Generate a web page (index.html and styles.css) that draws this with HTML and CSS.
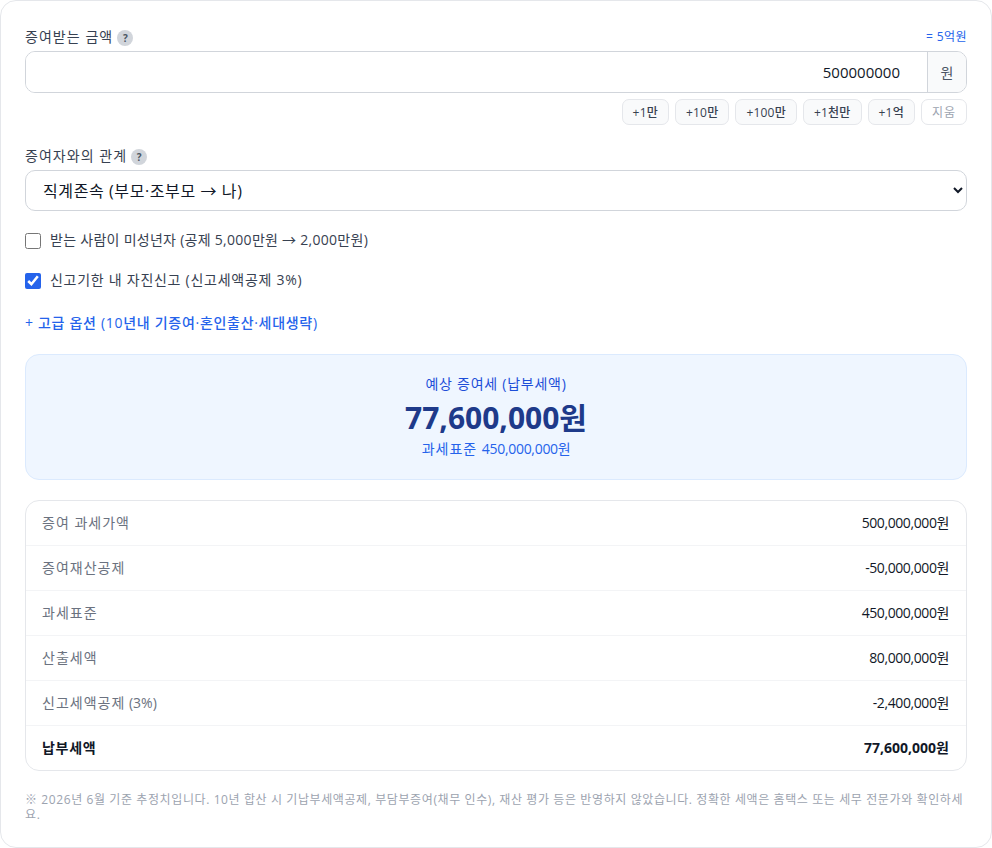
FILE: index.html
```html
<!DOCTYPE html>
<html lang="ko">
<head>
    <meta charset="utf-8">
    <title>증여세 계산기</title>
    <link rel="stylesheet" href="styles.css">
</head>
<body>
    <div class="card">
        <div class="field amount-field">
            <div class="label-row">
                <label class="label"><span class="label-text">증여받는 금액</span> <span class="help">?</span></label>
                <span class="hint">= 5억원</span>
            </div>
            <div class="input-group">
                <input class="amount-input" type="text" value="500000000">
                <span class="unit">원</span>
            </div>
            <div class="quick-group">
                <button class="quick">+1만</button>
                <button class="quick">+10만</button>
                <button class="quick">+100만</button>
                <button class="quick">+1천만</button>
                <button class="quick">+1억</button>
                <button class="quick clear">지움</button>
            </div>
        </div>

        <div class="field relation-field">
            <label class="label"><span class="label-text">증여자와의 관계</span> <span class="help">?</span></label>
            <select class="relation">
                <option>직계존속 (부모·조부모 → 나)</option>
            </select>
        </div>

        <label class="check minor"><input type="checkbox"> <span class="check-text">받는 사람이 미성년자 (공제 5,000만원 → 2,000만원)</span></label>
        <label class="check filing"><input type="checkbox" checked> <span class="check-text">신고기한 내 자진신고 (신고세액공제 3%)</span></label>

        <a class="advanced" href="#">+ 고급 옵션 (10년내 기증여·혼인출산·세대생략)</a>

        <div class="result">
            <div class="result-label">예상 증여세 (납부세액)</div>
            <div class="result-value">77,600,000원</div>
            <div class="result-sub"><span class="result-sub-name">과세표준 </span>450,000,000원</div>
        </div>

        <div class="breakdown">
            <div class="row"><span>증여 과세가액</span><b>500,000,000원</b></div>
            <div class="row"><span>증여재산공제</span><b>-50,000,000원</b></div>
            <div class="row"><span>과세표준</span><b>450,000,000원</b></div>
            <div class="row"><span>산출세액</span><b>80,000,000원</b></div>
            <div class="row"><span>신고세액공제<em class="latin"> (3%)</em></span><b>-2,400,000원</b></div>
            <div class="row total"><span>납부세액</span><b>77,600,000원</b></div>
        </div>

        <p class="note">※ 2026년 6월 기준 추정치입니다. 10년 합산 시 기납부세액공제, 부담부증여(채무 인수), 재산 평가 등은 반영하지 않았습니다. 정확한 세액은 홈택스 또는 세무 전문가와 확인하세요.</p>
    </div>
</body>
</html>
```

FILE: styles.css
```css
* {
    box-sizing: border-box;
}
body {
    margin: 0;
    background-color: #ffffff;
    font-family: "Open Sans", "Noto Sans CJK KR", sans-serif;
    color: #111827;
}
.card {
    height: 848px;
    padding: 24px;
    background-color: #ffffff;
    border: 1px solid #e5e7eb;
    border-radius: 16px;
    overflow: hidden;
}
.label-row {
    display: flex;
    justify-content: space-between;
    align-items: center;
    height: 26px;
}
.label {
    display: flex;
    align-items: center;
    gap: 4px;
    height: 24px;
    font-size: 14px;
    color: #374151;
}
.label-text {
    padding-bottom: 4px;
    letter-spacing: 1.05px;
}
.help {
    display: flex;
    align-items: center;
    justify-content: center;
    width: 16px;
    height: 16px;
    border-radius: 50%;
    background-color: #d1d5db;
    color: #4b5563;
    font-size: 10px;
    font-weight: 700;
}
.hint {
    padding-bottom: 4px;
    font-size: 12px;
    letter-spacing: 0.4px;
    color: #2563eb;
}
.input-group {
    display: flex;
    height: 42px;
    border: 1px solid #d1d5db;
    border-radius: 10px;
    overflow: hidden;
}
.amount-input {
    flex: 1;
    min-width: 0;
    padding: 0 27px 0 26px;
    border: none;
    outline: none;
    text-align: right;
    font-family: inherit;
    font-size: 15px;
    color: #111827;
}
.unit {
    display: flex;
    align-items: center;
    justify-content: center;
    width: 39px;
    border-left: 1px solid #d1d5db;
    background-color: #f9fafb;
    font-size: 14px;
    color: #4b5563;
}
.quick-group {
    display: flex;
    justify-content: flex-end;
    gap: 6px;
    margin-top: 6px;
}
.quick {
    height: 26px;
    padding: 0 10px;
    border: 1px solid #e5e7eb;
    border-radius: 7px;
    background-color: #f9fafb;
    font-family: inherit;
    font-size: 12px;
    font-weight: 500;
    letter-spacing: 0.2px;
    color: #374151;
}
.clear {
    font-weight: 400;
    letter-spacing: 1px;
    background-color: #ffffff;
    color: #9ca3af;
}
.relation-field {
    margin-top: 20px;
}
.relation-field .label {
    margin-bottom: 1px;
}
.relation {
    display: block;
    width: 100%;
    height: 41px;
    padding: 0 13px;
    border: 1px solid #d1d5db;
    border-radius: 10px;
    background-color: #ffffff;
    font-family: inherit;
    font-size: 16px;
    letter-spacing: 0.6px;
    color: #111827;
}
.check {
    display: flex;
    align-items: center;
    gap: 9px;
    height: 20px;
    font-size: 14px;
    color: #374151;
}
.check input {
    width: 16px;
    height: 16px;
    margin: 0;
    accent-color: #2563eb;
}
.check-text {
    padding-bottom: 4px;
}
.minor {
    margin-top: 20px;
    letter-spacing: 0.28px;
}
.filing {
    margin-top: 20px;
    letter-spacing: 0.73px;
}
.advanced {
    display: block;
    margin-top: 22px;
    font-size: 14px;
    line-height: 20px;
    font-weight: 500;
    letter-spacing: 0.7px;
    color: #2563eb;
    text-decoration: none;
}
.result {
    height: 126px;
    margin-top: 21px;
    padding-top: 20px;
    border: 1px solid #dbeafe;
    border-radius: 14px;
    background-color: #eff6ff;
    text-align: center;
}
.result-label {
    font-size: 14px;
    line-height: 18px;
    letter-spacing: 0.75px;
    color: #1d4ed8;
}
.result-value {
    margin-top: 5px;
    font-size: 30px;
    line-height: 40px;
    font-weight: 700;
    color: #1e3a8a;
}
.result-sub {
    margin-top: 2px;
    font-size: 14px;
    line-height: 18px;
    letter-spacing: -0.3px;
    color: #2563eb;
}
.result-sub-name {
    letter-spacing: 1px;
}
.breakdown {
    margin-top: 20px;
    border: 1px solid #e5e7eb;
    border-radius: 14px;
    overflow: hidden;
}
.row {
    display: flex;
    justify-content: space-between;
    align-items: center;
    height: 45px;
    padding: 0 17px 3px 16px;
    border-bottom: 1px solid #f3f4f6;
    font-size: 14px;
}
.row span {
    letter-spacing: 1px;
    color: #6b7280;
}
.row .latin {
    font-style: normal;
    letter-spacing: 0;
}
.row b {
    font-weight: 400;
    letter-spacing: -0.4px;
    color: #111827;
}
.row.total {
    height: 44px;
    border-bottom: none;
}
.row.total span,
.row.total b {
    font-weight: 700;
    color: #111827;
}
.row.total span {
    letter-spacing: 0.7px;
}
.row.total b {
    letter-spacing: 0;
}
.note {
    margin: 21px 0 0;
    font-size: 12px;
    line-height: 15px;
    letter-spacing: 0.6px;
    color: #9ca3af;
}
```
